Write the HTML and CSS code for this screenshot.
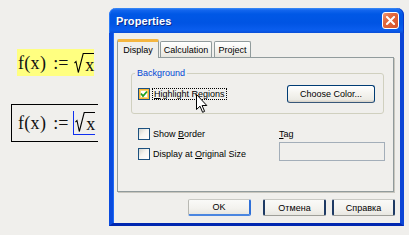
FILE: index.html
```html
<!DOCTYPE html>
<html>
<head>
<meta charset="utf-8">
<link rel="stylesheet" href="styles.css">
</head>
<body>
<div class="desk">
  <div class="sheet">
    <div class="region hl">
      <span class="fx">f(x)</span><span class="def">:=</span><span class="sqrt"><svg class="radix" width="10" height="24" viewBox="0 0 10 24"><path d="M0.5 12 L2 10.5 L4.3 21.5 L9.2 2.5 L10 2.5" fill="none" stroke="#000" stroke-width="1.1"/></svg><span class="rad">x</span></span>
    </div>
    <div class="region box">
      <span class="fx">f(x)</span><span class="def">:=</span><span class="edit"><span class="sqrt"><svg class="radix" width="10" height="24" viewBox="0 0 10 24"><path d="M0.5 12 L2 10.5 L4.3 21.5 L9.2 2.5 L10 2.5" fill="none" stroke="#000" stroke-width="1.1"/></svg><span class="rad">x</span></span></span>
    </div>
  </div>

  <div class="dialog">
    <div class="titlebar">
      <span class="title">Properties</span>
      <span class="close"><svg width="9" height="9" viewBox="0 0 9 9"><path d="M1 1 L8 8 M8 1 L1 8" stroke="#fff" stroke-width="2" stroke-linecap="square"/></svg></span>
    </div>
    <div class="client">
      <div class="tabs">
        <div class="tab sel">Display</div>
        <div class="tab t-calc">Calculation</div>
        <div class="tab t-proj">Project</div>
      </div>
      <div class="panel">
        <fieldset class="group">
          <legend>Background</legend>
          <div class="grouprow">
            <label class="check">
              <span class="cb on"><svg width="8" height="8" viewBox="0 0 8 8"><path d="M1 3.5 L3 6 L7 1.5" fill="none" stroke="#21A121" stroke-width="1.8"/></svg></span>
              <span class="focus"><u>H</u>ighlight Regions</span>
            </label>
            <span class="btn choose">Choose Color...</span>
          </div>
        </fieldset>
        <div class="opts">
          <label class="check"><span class="cb"></span><span>Show <u>B</u>order</span></label>
          <span class="taglabel"><u>T</u>ag</span>
          <label class="check low"><span class="cb"></span><span>Display at <u>O</u>riginal Size</span></label>
          <span class="input"></span>
        </div>
      </div>
      <div class="buttons">
        <span class="btn flat def">OK</span>
        <span class="btn flat">Отмена</span>
        <span class="btn flat">Справка</span>
      </div>
    </div>
  </div>

  <svg class="cursor" width="12" height="19" viewBox="0 0 12 19"><path d="M0.5 0.5 L0.5 15.5 L4 12.2 L6.6 18.3 L8.6 17.4 L6.1 11.5 L10.8 11.5 Z" fill="#fff" stroke="#000" stroke-width="1"/></svg>
</div>
</body>
</html>
```

FILE: styles.css
```css
* { box-sizing: border-box; }
html, body { margin: 0; padding: 0; }
body {
  width: 409px;
  height: 235px;
  overflow: hidden;
  background: #F0EFEC;
  font-family: "Liberation Sans", Arial, sans-serif;
  font-size: 9px;
  color: #000;
}
.desk {
  position: relative;
  display: flex;
  align-items: flex-start;
  width: 409px;
  height: 235px;
}

/* worksheet */
.sheet {
  width: 109px;
  flex: none;
  display: flex;
  flex-direction: column;
  padding-top: 49px;
}
.region {
  display: flex;
  align-items: center;
  font-family: "Liberation Serif", "Times New Roman", serif;
  font-size: 18px;
  line-height: 20px;
  white-space: nowrap;
  color: #111;
}
.hl {
  margin-left: 17px;
  width: 77px;
  height: 27px;
  padding-left: 1px;
  background: #FFFF80;
}
.box {
  margin-top: 28px;
  margin-left: 11px;
  width: 87px;
  height: 38px;
  padding-left: 6px;
  border: 1px solid #000;
  border-right: none;
  overflow: hidden;
}
.fx { letter-spacing: 0.3px; }
.def { margin-left: 7px; margin-right: 6px; }
.sqrt {
  display: inline-flex;
  align-items: flex-start;
  height: 24px;
}
.radix { display: block; flex: none; }
.rad {
  display: block;
  border-top: 1px solid #000;
  margin-top: 2px;
  padding: 3px 0 0 1px;
  line-height: 16px;
}
.edit {
  display: inline-flex;
  margin-left: -1px;
  padding: 0 0 0 1px;
  border-left: 1px solid #1030F0;
  border-bottom: 1px solid #1030F0;
  height: 24px;
  align-items: flex-end;
}

/* dialog */
.dialog {
  margin-top: 8px;
  width: 295px;
  height: 218px;
  flex: none;
  display: flex;
  flex-direction: column;
}
.titlebar {
  height: 25px;
  flex: none;
  display: flex;
  align-items: center;
  justify-content: space-between;
  padding: 1px 5px 0 7px;
  border-radius: 7px 7px 0 0;
  background: linear-gradient(to bottom, #3D8DF5 0, #1466EE 2px, #0058E6 6px, #0054E3 60%, #0A5DEE 88%, #0A4ED8 100%);
  box-shadow: inset 1px 0 0 #2C7BF8, inset -1px 0 0 #0638C8;
}
.title {
  color: #fff;
  font-weight: bold;
  font-size: 11px;
  text-shadow: 1px 1px 0 #0A2A8A;
  letter-spacing: 0.1px;
}
.close {
  width: 17px;
  height: 17px;
  margin-top: -1px;
  display: flex;
  align-items: center;
  justify-content: center;
  border: 1px solid #fff;
  border-radius: 3px;
  background: linear-gradient(135deg, #F09A7A 0, #E2693F 35%, #D5512A 100%);
}
.client {
  flex: 1;
  display: flex;
  flex-direction: column;
  padding: 6px 6px 7px 4px;
  background: #F0EFEC;
  border-left: 4px solid #0A4BDE;
  border-right: 4px solid #0A44D6;
  border-bottom: 3px solid #0027B0;
  box-shadow: inset 1px 0 0 #1E68F5;
}

/* tabs */
.tabs {
  height: 18px;
  flex: none;
  display: flex;
  align-items: flex-end;
  position: relative;
  z-index: 1;
}
.tab {
  height: 16px;
  display: flex;
  align-items: center;
  justify-content: center;
  border: 1px solid #919B9C;
  border-bottom: none;
  border-radius: 2px 2px 0 0;
  background: linear-gradient(#FFFFFF, #F0EFEA 70%, #E6E5DE);
  padding-top: 1px;
}
.tab.sel {
  width: 42px;
  height: 19px;
  margin-bottom: -1px;
  background: #F0EFEC;
  border-top: 3px solid #F5B640;
  padding-bottom: 1px;
}
.t-calc { width: 52px; margin-left: 1px; }
.t-proj { width: 37px; margin-left: 2px; }

.panel {
  height: 135px;
  flex: none;
  border: 1px solid #919B9C;
  box-shadow: 1px 1px 0 #C9C7BF;
  padding: 10px 0 0 13px;
  display: flex;
  flex-direction: column;
  align-items: flex-start;
}
.group {
  margin: 0;
  width: 253px;
  padding: 7px 8px 10px 6px;
  border: 1px solid #D0D0BF;
  border-radius: 3px;
}
.group legend {
  color: #0046D5;
  padding: 0 2px;
  margin-left: -3px;
  line-height: 10px;
}
.grouprow {
  height: 18px;
  display: flex;
  align-items: center;
  justify-content: space-between;
}
.check {
  display: flex;
  align-items: center;
  gap: 3px;
}
.cb {
  width: 12px;
  height: 12px;
  flex: none;
  border: 1px solid #1C5180;
  background: linear-gradient(135deg, #D4D4CD 0, #F4F4F0 45%, #FFFFFF 100%);
  display: flex;
  align-items: center;
  justify-content: center;
}
.cb.on {
  box-shadow: inset 0 0 0 1px #F8B636, inset 0 0 0 2px #FCD67A;
  background: #FFFFFF;
}
.focus {
  outline: 1px dotted #000;
  padding: 0 1px;
  line-height: 10px;
}
.btn {
  display: flex;
  align-items: center;
  justify-content: center;
  border: 1px solid #003C74;
  border-radius: 3px;
  background: linear-gradient(#FFFFFF 0, #F6F5F1 40%, #ECEBE5 85%, #D6D0C5 100%);
  white-space: nowrap;
}
.choose { width: 88px; height: 18px; border-bottom-color: #38587A; }

.opts {
  margin-top: 11px;
  margin-left: 7px;
  display: grid;
  grid-template-columns: 141px 106px;
  grid-template-rows: 17px 19px;
  align-items: center;
}
.check.low { align-self: end; margin-bottom: 1px; }
.taglabel { line-height: 10px; }
.input {
  display: block;
  height: 19px;
  border: 1px solid #A3AEB9;
  background: #F0EFEC;
}

.buttons {
  margin-top: 7px;
  margin-right: -1px;
  display: flex;
  justify-content: flex-end;
  gap: 6px;
}
.buttons .btn { width: 63px; height: 17px; }
.btn.flat {
  border-radius: 2px;
  border-left: 2px solid #1E3A64;
  border-right: 2px solid #1E3A64;
  border-top: 1px solid #C9C9C4;
  border-bottom: 1px solid #9E9E98;
  background: linear-gradient(#FAFAF8 0, #F3F2EE 60%, #E8E7E1 100%);
}
.btn.flat.def {
  border-left: 1px solid #B8B8B2;
  border-top: 1px solid #C9C9C4;
  border-right: 2px solid #2E6FD8;
  border-bottom: 2px solid #4A86E0;
}

.cursor {
  position: absolute;
  left: 196px;
  top: 94px;
}
```
